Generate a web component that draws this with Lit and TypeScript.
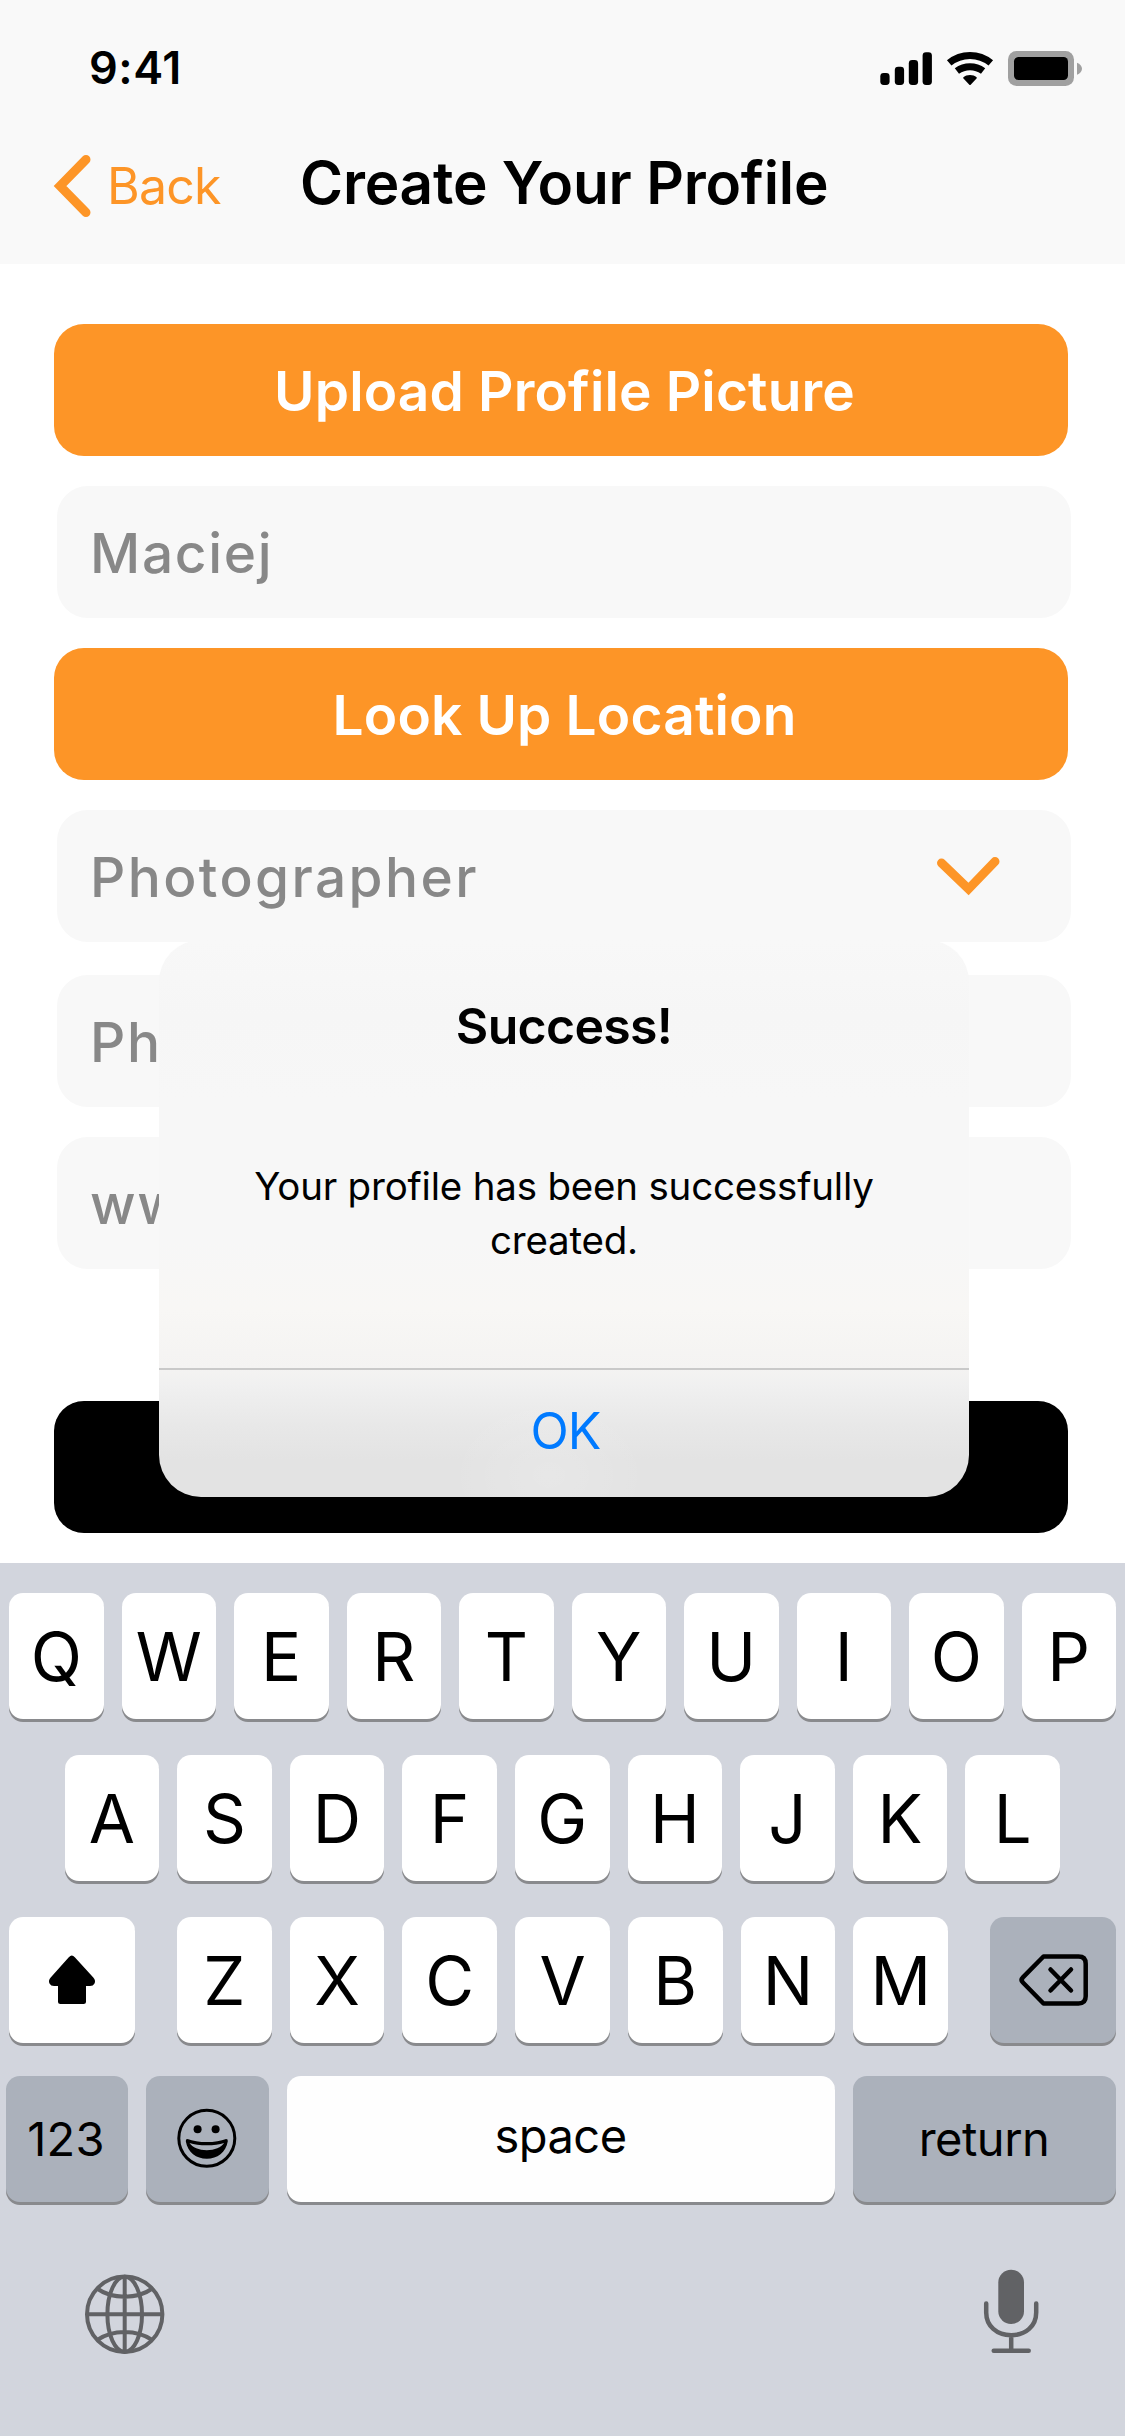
import { LitElement, html, css, svg, nothing } from "lit";
import { customElement, property } from "lit/decorators.js";

const fontStack = css`Inter, "Liberation Sans", sans-serif`;

@customElement("status-bar")
class StatusBar extends LitElement {
  static styles = css`
    :host { display: flex; justify-content: space-between; height: 132px; box-sizing: border-box; padding: 41px 43px 0 89px; font-family: ${fontStack}; }
    .time { font-size: 45px; font-weight: 600; line-height: 54px; letter-spacing: 0.5px; color: #000; }
    .icons { display: block; width: 204px; height: 40px; margin-top: 7px; }
  `;
  render() {
    return html`
      <span class="time">9:41</span>
      <svg class="icons" viewBox="878 48 204 40">
        <rect x="880.3" y="73" width="9.3" height="12" rx="3.4" />
        <rect x="894.8" y="66.7" width="9.3" height="18.3" rx="3.4" />
        <rect x="908.8" y="60" width="9.3" height="25" rx="3.4" />
        <rect x="922.6" y="52.3" width="9.3" height="32.7" rx="3.4" />
        <g transform="scale(1 0.978)">
          <path d="M949.2 64.3Q958.3 56.7 970 56.7T990.8 64.3" fill="none" stroke="#000" stroke-width="7" />
          <path d="M956.9 72.7Q962.7 68.3 970 68.3T983.1 72.7" fill="none" stroke="#000" stroke-width="7" />
          <path d="M970 76.6c2.6 0 4.9.9 6.5 2.3c.5.5.4.9 0 1.4l-5.800 6.300c-.5.5-.9.5-1.400 0l-5.800-6.300c-.4-.5-.5-.9 0-1.400c1.600-1.400 3.900-2.300 6.500-2.300z" />
        </g>
        <rect x="1008" y="51" width="66" height="35" rx="8.5" fill="#a0a0a0" />
        <rect x="1014" y="57" width="54" height="23" rx="4.5" />
        <path d="M1077 62.7c3 1.200 5 3.500 5 6s-2 4.800-5 6z" fill="#a0a0a0" />
      </svg>
    `;
  }
}

@customElement("nav-bar")
class NavBar extends LitElement {
  static styles = css`
    :host { display: grid; grid-template-columns: 300px 1fr; height: 132px; box-sizing: border-box; padding-top: 17px; font-family: ${fontStack}; }
    .back { display: flex; align-items: center; height: 72px; padding: 1px 0 0 53px; box-sizing: border-box; color: #fd9527; font-size: 50px; letter-spacing: -0.8px; }
    .chevron { display: block; width: 40px; height: 66px; margin: 0 14px 0 0; }
    .title { margin: -2px 0 0; font-size: 58.5px; line-height: 72px; font-weight: 600; letter-spacing: -0.2px; white-space: nowrap; color: #000; }
  `;
  render() {
    return html`
      <div class="back">
        <svg class="chevron" viewBox="53 152 40 66">
          <path d="M86 158.5L60 185L86 211.5" fill="none" stroke="#fd9527" stroke-width="9" stroke-linecap="round" />
        </svg>
        <span>Back</span>
      </div>
      <h1 class="title">Create Your Profile</h1>
    `;
  }
}

@customElement("form-field")
class FormField extends LitElement {
  @property() value = "";
  @property({ type: Boolean }) dropdown = false;
  static styles = css`
    :host { display: flex; justify-content: space-between; align-items: center; box-sizing: border-box; width: 1014px; height: 132px; margin-left: 3px; padding: 2px 70px 0 33px; border-radius: 31px; background: #f8f8f8; color: #888; font-family: ${fontStack}; font-size: 55px; font-weight: 500; letter-spacing: 1.7px; }
    :host([dropdown]) { letter-spacing: 2.4px; }
    .caret { display: block; width: 66px; height: 42px; }
  `;
  render() {
    return html`
      <span>${this.value}</span>
      ${this.dropdown
        ? html`<svg class="caret" viewBox="935 856 66 42">
            <path d="M941.5 863L968.5 889L995 861.5" fill="none" stroke="#fd9527" stroke-width="9" stroke-linecap="round" />
          </svg>`
        : nothing}
    `;
  }
}

@customElement("action-button")
class ActionButton extends LitElement {
  @property() label = "";
  @property({ reflect: true }) tone = "orange";
  static styles = css`
    :host { display: flex; align-items: center; justify-content: center; box-sizing: border-box; width: 1014px; height: 132px; padding: 2px 0 0 7px; border-radius: 30px; background: #fd9527; color: #fff; font-family: ${fontStack}; font-size: 55px; font-weight: 600; letter-spacing: 0.15px; white-space: nowrap; }
    :host([tone="black"]) { background: #000; }
  `;
  render() {
    return html`<span>${this.label}</span>`;
  }
}

@customElement("alert-dialog")
class AlertDialog extends LitElement {
  static styles = css`
    :host { display: flex; flex-direction: column; overflow: hidden; border-radius: 42px; font-family: ${fontStack}; color: #000; text-align: center;
      background:
        radial-gradient(ellipse 100px 80px at 390px 535px, rgba(255,255,255,0.15), rgba(255,255,255,0)),
        linear-gradient(to bottom, #f8f8f8 0, #f6f6f6 75px, #f7f7f7 160px, #f7f7f7 300px, #f8f7f5 370px, #f4f3f2 428px, #f0f0f0 446px, #e8e8e8 485px, #e3e3e3 520px, #e3e3e3 557px); }
    .title { margin: 0; padding-top: 54px; font-size: 50px; line-height: 64px; font-weight: 600; letter-spacing: -0.7px; }
    .message { flex: 1; margin: 0; padding: 101px 80px 0; font-size: 38.5px; line-height: 54px; letter-spacing: -0.2px; }
    .confirm { display: flex; align-items: center; justify-content: center; height: 129px; padding: 0 0 5px 3px; box-sizing: border-box; border-top: 2px solid #c9c9c9; font-size: 50px; letter-spacing: -0.9px; color: #007aff; }
  `;
  render() {
    return html`
      <h2 class="title">Success!</h2>
      <p class="message">Your profile has been successfully<br />created.</p>
      <div class="confirm">OK</div>
    `;
  }
}

const shiftIcon = svg`<path d="M68.8 1957.2q3-3.6 6 0l18.5 20.3q2.7 3 1.2 6q-1.3 2.5-4.5 2.5h-4v15.5q0 2.5-2.5 2.5h-23q-2.5 0-2.5-2.5v-15.5h-4q-3.2 0-4.5-2.5q-1.5-3 1.2-6z" />`;
const deleteIcon = svg`<g fill="none" stroke="#000" stroke-width="4.5" stroke-linejoin="round" stroke-linecap="round"><path d="M1043.5 1956.500h35q7.200 0 7.200 7.200v32.600q0 7.200-7.200 7.200h-35l-20.600-21q-2.600-2.600 0-5.200z" /><path d="M1050.500 1969.500l20.500 21M1071 1969.500l-20.500 21" /></g>`;
const smileIcon = svg`<circle cx="206.8" cy="2138.3" r="28" fill="none" stroke="#000" stroke-width="3" /><circle cx="197.6" cy="2129.2" r="4" /><circle cx="215.6" cy="2129.2" r="4" /><path fill-rule="evenodd" d="M187.500 2139q-2 0-1.700 2.200c2 11.300 10.500 17.500 21 17.500s19-6.200 21-17.500q.3-2.200-1.700-2.200c-5 2-12 3.100-19.300 3.100s-14.300-1.100-19.300-3.100zM189.500 2143c4.500 1.500 10.500 2.300 17.300 2.300s12.800-.8 17.300-2.300c-2.800 4.500-9.600 7.200-17.300 7.200s-14.500-2.700-17.300-7.200z" />`;

const icons: Record<string, { box: string; art: unknown }> = {
  shift: { box: "9 1917 126 126", art: shiftIcon },
  delete: { box: "990 1917 126 126", art: deleteIcon },
  smile: { box: "146 2076 123 126", art: smileIcon },
};

@customElement("key-cap")
class KeyCap extends LitElement {
  @property() label = "";
  @property() icon = "";
  static styles = css`
    :host { display: flex; align-items: center; justify-content: center; box-sizing: border-box; height: 126px; border-radius: 14px; background: #fff; box-shadow: 0 3px 0 #898a8d; color: #000; font-family: ${fontStack}; font-size: 67px; }
    :host([dark]) { background: #abb1bb; }
    :host([word]) { padding-right: 1px; padding-bottom: 1px; font-size: 47px; letter-spacing: -0.5px; }
    :host([digits]) { padding-right: 2px; letter-spacing: 0.3px; }
    :host([raised]) { padding-bottom: 7px; background: #fefefe; }
    .icon { display: block; width: 100%; height: 126px; }
  `;
  render() {
    const icon = icons[this.icon];
    return icon ? html`<svg class="icon" viewBox=${icon.box}>${icon.art}</svg>` : html`<span>${this.label}</span>`;
  }
}

@customElement("key-board")
class KeyBoard extends LitElement {
  static styles = css`
    :host { display: flex; flex-direction: column; box-sizing: border-box; height: 873px; padding: 30px 9px 0; background: #d2d5dd; }
    .row { display: grid; column-gap: 18px; height: 126px; margin-bottom: 36px; }
    .row1 { grid-template-columns: repeat(10, 1fr); }
    .row2 { grid-template-columns: repeat(9, 1fr); padding: 0 56px 0 55.5px; }
    .row3 { grid-template-columns: 126px 771px 126px; column-gap: 42px; margin-bottom: 33px; }
    .letters { display: grid; grid-template-columns: repeat(7, 1fr); column-gap: 18px; }
    .row4 { grid-template-columns: 122px 123px 548px 263px; margin: 0 0 0 -3px; }
    .tools { display: flex; justify-content: space-between; padding: 65px 61px 0 72px; }
    .tool { display: block; width: 88px; height: 92px; }
  `;
  render() {
    const caps = (letters: string) => [...letters].map((l) => html`<key-cap label=${l}></key-cap>`);
    return html`
      <div class="row row1">${caps("QWERTYUIOP")}</div>
      <div class="row row2">${caps("ASDFGHJKL")}</div>
      <div class="row row3">
        <key-cap icon="shift"></key-cap>
        <div class="letters">${caps("ZXCVBNM")}</div>
        <key-cap dark icon="delete"></key-cap>
      </div>
      <div class="row row4">
        <key-cap dark word digits label="123"></key-cap>
        <key-cap dark icon="smile"></key-cap>
        <key-cap word raised label="space"></key-cap>
        <key-cap dark word label="return"></key-cap>
      </div>
      <div class="tools">
        <svg class="tool" viewBox="81 2267 88 92" fill="none" stroke="#616265" stroke-width="4">
          <circle cx="124.7" cy="2314.3" r="37.7" />
          <ellipse cx="124.7" cy="2314.3" rx="17.3" ry="37.5" />
          <path d="M124.700 2276v76M87 2314.300h75.400M97 2288.500c7 5 16 8.200 27.700 8.200s20.700-3.200 27.700-8.200M97 2340.100c7-5 16-8.200 27.700-8.200s20.700 3.200 27.700 8.200" />
        </svg>
        <svg class="tool" viewBox="967 2267 88 92" fill="none" stroke="#616265" stroke-width="4.5" stroke-linecap="round">
          <rect x="998.3" y="2269.7" width="25.7" height="54.3" rx="12.8" fill="#616265" stroke="none" />
          <path d="M986.200 2303.500v9c0 13.500 10.500 22.700 25 22.700s25-9.200 25-22.700v-9M1011.200 2336v14M993.700 2350.800h35" />
        </svg>
      </div>
    `;
  }
}

@customElement("app-root")
class AppRoot extends LitElement {
  static styles = css`
    :host { display: block; position: relative; width: 1125px; height: 2436px; overflow: hidden; background: #fff; }
    .header { height: 264px; background: #f9f9f9; }
    .form { display: flex; flex-direction: column; box-sizing: border-box; height: 1299px; padding: 60px 0 0 54px; gap: 30px; }
    .phone { margin-top: 3px; }
    .submit { margin-top: 102px; }
    .dialog { position: absolute; left: 159px; top: 940px; width: 810px; height: 557px; }
  `;
  render() {
    return html`
      <header class="header">
        <status-bar></status-bar>
        <nav-bar></nav-bar>
      </header>
      <main class="form">
        <action-button label="Upload Profile Picture"></action-button>
        <form-field value="Maciej"></form-field>
        <action-button label="Look Up Location"></action-button>
        <form-field value="Photographer" dropdown></form-field>
        <form-field class="phone" value="Ph"></form-field>
        <form-field value="ww"></form-field>
        <action-button class="submit" tone="black"></action-button>
      </main>
      <key-board></key-board>
      <alert-dialog class="dialog"></alert-dialog>
    `;
  }
}
